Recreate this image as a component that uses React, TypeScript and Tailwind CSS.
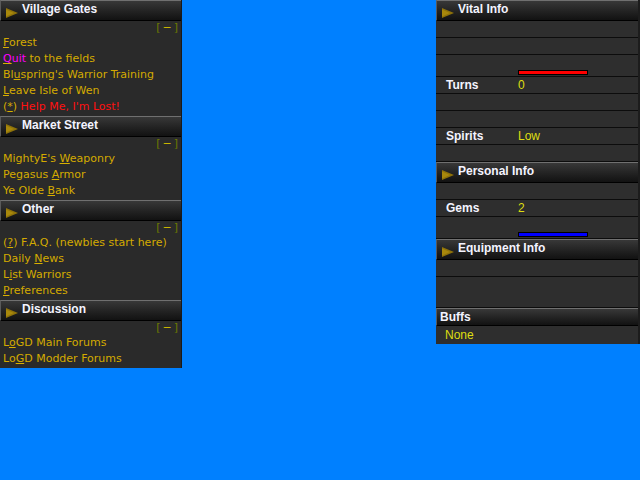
import React from "react";

const Tri = () => (
  <svg width="12" height="10" viewBox="0 0 12 10" className="shrink-0">
    <polygon points="0,0 12,5 0,10" fill="#8e720a" />
    <polygon points="0,1.5 8,5 0,8.5" fill="#a8880c" />
  </svg>
);

function Header({ title }: { title: string }) {
  return (
    <div className="h-[21px] flex items-center gap-[4px] pl-[5px] border-t border-l border-t-[#707070] border-l-[#5a5a5a] border-b border-b-black bg-linear-to-b from-[#383838] to-[#121212]">
      <div className="mt-[4px]"><Tri /></div>
      <span className="mb-[3px] font-bold text-[12px] text-[#f4f4ff] font-['Liberation_Sans',sans-serif]">{title}</span>
    </div>
  );
}

const U = ({ children }: { children: React.ReactNode }) => (
  <span className="underline decoration-[#d8b000] underline-offset-[1px]">{children}</span>
);

function Collapse() {
  return (
    <div className="h-[14px] flex justify-end pr-[3px] text-[11px] leading-[14px]">
      <span className="text-[#6e7a00]">[</span>
      <span className="text-[#c8b400] px-[2px]">−</span>
      <span className="text-[#6e7a00]">]</span>
    </div>
  );
}

function Section({ title, children }: { title: string; children: React.ReactNode }) {
  return (
    <div>
      <Header title={title} />
      <div className="pb-[1px]">
        <Collapse />
        <div className="pl-[3px] text-[11px] leading-[16px] text-[#d4aa00]">{children}</div>
      </div>
    </div>
  );
}

function Row({ h = 17, label, value, bar }: { h?: number; label?: string; value?: string; bar?: string }) {
  const hc = h === 17 ? "h-[17px]" : h === 22 ? "h-[22px]" : "h-[31px]";
  return (
    <div className={`${hc} border-b border-b-[#0c0c0c] flex items-center`}>
      {label && <span className="w-[82px] shrink-0 pl-[10px] font-bold text-[12px] text-[#f4f4ff] font-['Liberation_Sans',sans-serif]">{label}</span>}
      {value && <span className="text-[12px] text-[#dede10] font-['Liberation_Sans',sans-serif]">{value}</span>}
      {bar && (
        <div className="self-end mb-[1px] ml-[82px] w-[70px] h-[5px] border border-black" style={{ background: bar }} />
      )}
    </div>
  );
}

export default function App() {
  return (
    <div className="w-[640px] h-[480px] bg-[#0080ff] flex justify-between items-start font-['DejaVu_Sans',sans-serif]">
      <div className="w-[182px] bg-[#2a2a2a] border-r border-r-[#1a1a1a]">
        <Section title="Village Gates">
          <div><U>F</U>orest</div>
          <div><span className="text-[#ff00ff]"><U>Q</U>uit</span> to the fields</div>
          <div>Bl<U>u</U>spring's Warrior Training</div>
          <div><U>L</U>eave Isle of Wen</div>
          <div><span>(<U>*</U>)</span> <span className="text-[#ff1010]">Help Me, I'm Lost!</span></div>
        </Section>
        <Section title="Market Street">
          <div>MightyE's <U>W</U>eaponry</div>
          <div>Pegasus <U>A</U>rmor</div>
          <div>Ye Olde <U>B</U>ank</div>
        </Section>
        <Section title="Other">
          <div>(<U>?</U>) F.A.Q. (newbies start here)</div>
          <div>Daily <U>N</U>ews</div>
          <div>L<U>i</U>st Warriors</div>
          <div><U>P</U>references</div>
        </Section>
        <Section title="Discussion">
          <div>L<U>o</U>GD Main Forums</div>
          <div>Lo<U>G</U>D Modder Forums</div>
        </Section>
      </div>
      <div className="w-[204px] bg-[#2e2e2e] border-r-2 border-r-[#1c1c1c]">
        <Header title="Vital Info" />
        <Row />
        <Row />
        <Row h={22} bar="#ff0000" />
        <Row label="Turns" value="0" />
        <Row />
        <Row />
        <Row label="Spirits" value="Low" />
        <Row />
        <Header title="Personal Info" />
        <Row />
        <Row label="Gems" value="2" />
        <Row h={22} bar="#0000ff" />
        <Header title="Equipment Info" />
        <Row />
        <Row h={31} />
        <div className="h-[18px] flex items-center pl-[3px] border-t border-l border-t-[#707070] border-l-[#5a5a5a] border-b border-b-black bg-linear-to-b from-[#383838] to-[#121212]">
          <span className="font-bold text-[12px] text-[#f4f4ff] font-['Liberation_Sans',sans-serif]">Buffs</span>
        </div>
        <div className="h-[18px] flex items-center pl-[9px] text-[12px] text-[#dede10] font-['Liberation_Sans',sans-serif]">None</div>
      </div>
    </div>
  );
}
